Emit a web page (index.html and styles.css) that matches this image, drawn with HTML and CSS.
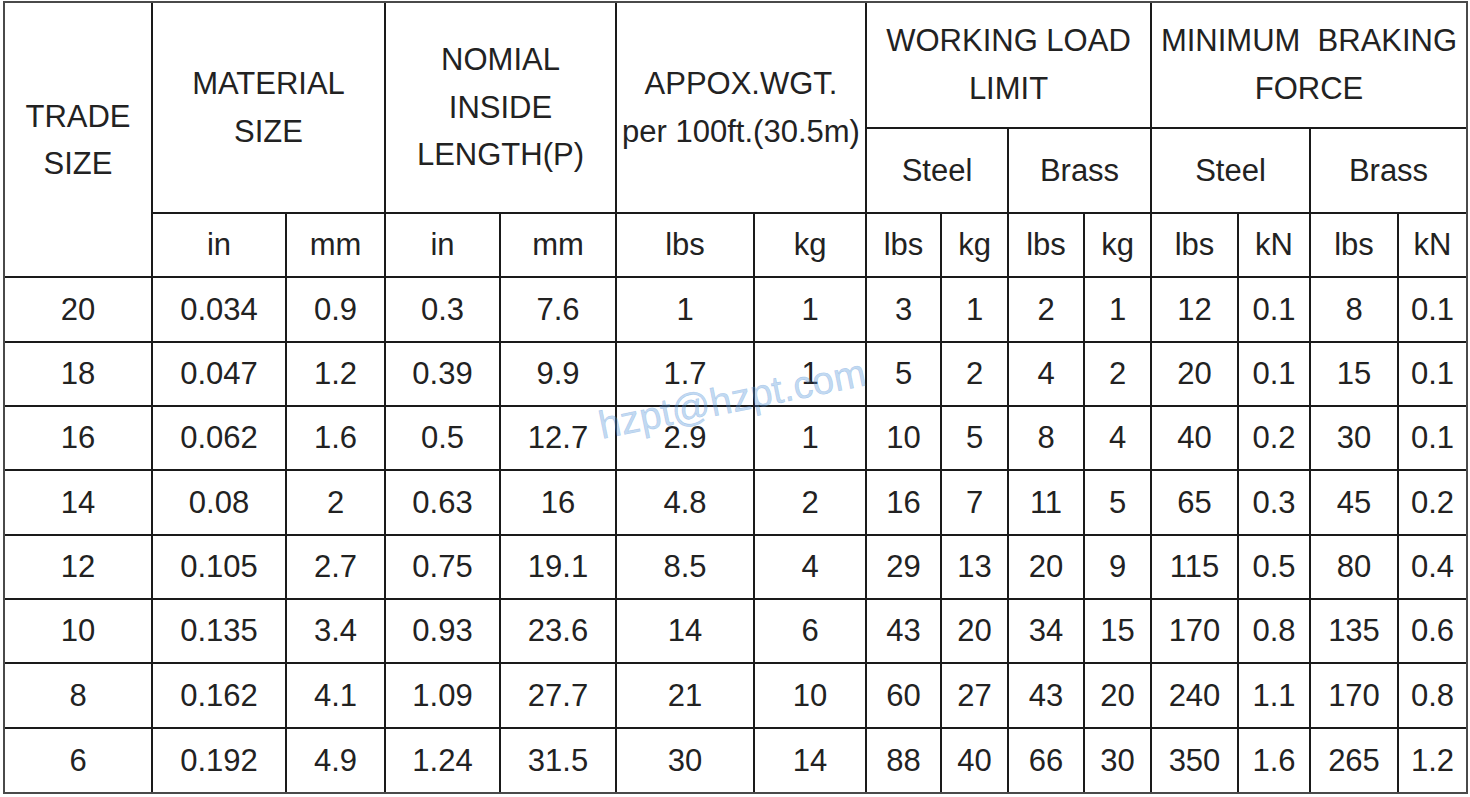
FILE: index.html
```html
<!DOCTYPE html>
<html>
<head>
<meta charset="utf-8">
<link rel="stylesheet" href="styles.css">
</head>
<body>
<div class="sheet">
  <div class="grid">
    <div class="c h-trade">TRADE<br>SIZE</div>
    <div class="c h-mat">MATERIAL<br>SIZE</div>
    <div class="c h-nom">NOMIAL<br>INSIDE<br>LENGTH(P)</div>
    <div class="c h-wgt">APPOX.WGT.<br>per 100ft.(30.5m)</div>
    <div class="c h-wll">WORKING LOAD<br>LIMIT</div>
    <div class="c h-mbf">MINIMUM&nbsp;&nbsp;BRAKING<br>FORCE</div>
    <div class="c s1">Steel</div>
    <div class="c s2">Brass</div>
    <div class="c s3">Steel</div>
    <div class="c s4">Brass</div>
    <div class="c u">in</div><div class="c u">mm</div>
    <div class="c u">in</div><div class="c u">mm</div>
    <div class="c u">lbs</div><div class="c u">kg</div>
    <div class="c u">lbs</div><div class="c u">kg</div>
    <div class="c u">lbs</div><div class="c u">kg</div>
    <div class="c u">lbs</div><div class="c u">kN</div>
    <div class="c u">lbs</div><div class="c u">kN</div>

    <div class="c">20</div><div class="c">0.034</div><div class="c">0.9</div><div class="c">0.3</div><div class="c">7.6</div><div class="c">1</div><div class="c">1</div><div class="c">3</div><div class="c">1</div><div class="c">2</div><div class="c">1</div><div class="c">12</div><div class="c">0.1</div><div class="c">8</div><div class="c">0.1</div>
    <div class="c">18</div><div class="c">0.047</div><div class="c">1.2</div><div class="c">0.39</div><div class="c">9.9</div><div class="c">1.7</div><div class="c">1</div><div class="c">5</div><div class="c">2</div><div class="c">4</div><div class="c">2</div><div class="c">20</div><div class="c">0.1</div><div class="c">15</div><div class="c">0.1</div>
    <div class="c">16</div><div class="c">0.062</div><div class="c">1.6</div><div class="c">0.5</div><div class="c">12.7</div><div class="c">2.9</div><div class="c">1</div><div class="c">10</div><div class="c">5</div><div class="c">8</div><div class="c">4</div><div class="c">40</div><div class="c">0.2</div><div class="c">30</div><div class="c">0.1</div>
    <div class="c">14</div><div class="c">0.08</div><div class="c">2</div><div class="c">0.63</div><div class="c">16</div><div class="c">4.8</div><div class="c">2</div><div class="c">16</div><div class="c">7</div><div class="c">11</div><div class="c">5</div><div class="c">65</div><div class="c">0.3</div><div class="c">45</div><div class="c">0.2</div>
    <div class="c">12</div><div class="c">0.105</div><div class="c">2.7</div><div class="c">0.75</div><div class="c">19.1</div><div class="c">8.5</div><div class="c">4</div><div class="c">29</div><div class="c">13</div><div class="c">20</div><div class="c">9</div><div class="c">115</div><div class="c">0.5</div><div class="c">80</div><div class="c">0.4</div>
    <div class="c">10</div><div class="c">0.135</div><div class="c">3.4</div><div class="c">0.93</div><div class="c">23.6</div><div class="c">14</div><div class="c">6</div><div class="c">43</div><div class="c">20</div><div class="c">34</div><div class="c">15</div><div class="c">170</div><div class="c">0.8</div><div class="c">135</div><div class="c">0.6</div>
    <div class="c">8</div><div class="c">0.162</div><div class="c">4.1</div><div class="c">1.09</div><div class="c">27.7</div><div class="c">21</div><div class="c">10</div><div class="c">60</div><div class="c">27</div><div class="c">43</div><div class="c">20</div><div class="c">240</div><div class="c">1.1</div><div class="c">170</div><div class="c">0.8</div>
    <div class="c">6</div><div class="c">0.192</div><div class="c">4.9</div><div class="c">1.24</div><div class="c">31.5</div><div class="c">30</div><div class="c">14</div><div class="c">88</div><div class="c">40</div><div class="c">66</div><div class="c">30</div><div class="c">350</div><div class="c">1.6</div><div class="c">265</div><div class="c">1.2</div>
  </div>
  <span class="watermark">hzpt@hzpt.com</span>
</div>
</body>
</html>
```

FILE: styles.css
```css
html, body {
  margin: 0;
  padding: 0;
  background: #ffffff;
  overflow: hidden;
}

.sheet {
  position: relative;
  width: 1470px;
  height: 797px;
  padding: 1px 0 0 3px;
  box-sizing: border-box;
}

.grid {
  display: grid;
  grid-template-columns: 146px 132px 97px 113px 114px 136px 110px 73px 65px 74px 65px 85px 70px 86px 67px;
  grid-template-rows: 124px 83px 62px 63px 62px 62px 63px 62px 62px 63px 63px;
  gap: 2px;
  width: max-content;
  background: #1a1a1a;
  border: 2px solid #4a4a4a;
  font-family: "Liberation Sans", Arial, sans-serif;
  font-size: 31px;
  color: #222222;
}

.c {
  background: #ffffff;
  display: flex;
  align-items: center;
  justify-content: center;
  text-align: center;
  white-space: nowrap;
  line-height: 48px;
}

.h-trade { grid-column: 1; grid-row: 1 / 4; line-height: 47px; }
.h-mat { grid-column: 2 / 4; grid-row: 1 / 3; }
.h-nom { grid-column: 4 / 6; grid-row: 1 / 3; line-height: 47.5px; }
.h-wgt { grid-column: 6 / 8; grid-row: 1 / 3; }
.h-wll { grid-column: 8 / 12; grid-row: 1; }
.h-mbf { grid-column: 12 / 16; grid-row: 1; }
.s1 { grid-column: 8 / 10; grid-row: 2; }
.s2 { grid-column: 10 / 12; grid-row: 2; }
.s3 { grid-column: 12 / 14; grid-row: 2; }
.s4 { grid-column: 14 / 16; grid-row: 2; }

.watermark {
  position: absolute;
  left: 603px;
  top: 407px;
  font-family: "Liberation Sans", Arial, sans-serif;
  font-size: 39px;
  line-height: 38px;
  color: rgba(80, 145, 215, 0.36);
  -webkit-text-stroke: 0.6px rgba(80, 145, 215, 0.3);
  transform-origin: 0 100%;
  transform: rotate(-11.5deg);
  pointer-events: none;
  white-space: nowrap;
}
```
